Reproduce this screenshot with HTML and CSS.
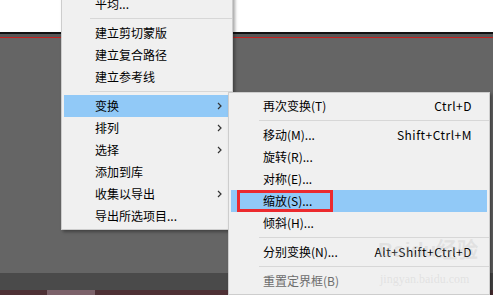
FILE: index.html
```html
<!DOCTYPE html>
<html lang="zh-CN">
<head>
  <meta charset="UTF-8">
  <title>变换菜单</title>
  <link rel="stylesheet" href="styles.css">
</head>
<body>
  <div class="backdrop">
    <div class="doc-top"></div>
    <div class="doc-edge"></div>
    <div class="doc-gap"></div>
    <div class="doc-red"></div>
    <div class="workspace"></div>
    <div class="panel-bar"></div>
    <div class="tab-bar"><span class="tab"></span></div>
  </div>

  <div class="menu menu-main">
    <div class="item">平均...</div>
    <div class="sep"></div>
    <div class="item">建立剪切蒙版</div>
    <div class="item">建立复合路径</div>
    <div class="item">建立参考线</div>
    <div class="sep"></div>
    <div class="item active has-sub">变换<svg class="arrow" viewBox="0 0 5 8"><path d="M1 1l3 3-3 3" /></svg></div>
    <div class="item has-sub">排列<svg class="arrow" viewBox="0 0 5 8"><path d="M1 1l3 3-3 3" /></svg></div>
    <div class="item has-sub">选择<svg class="arrow" viewBox="0 0 5 8"><path d="M1 1l3 3-3 3" /></svg></div>
    <div class="item">添加到库</div>
    <div class="item has-sub">收集以导出<svg class="arrow" viewBox="0 0 5 8"><path d="M1 1l3 3-3 3" /></svg></div>
    <div class="item">导出所选项目...</div>
  </div>

  <div class="menu menu-sub">
    <div class="item"><span>再次变换(T)</span><span class="key">Ctrl+D</span></div>
    <div class="sep"></div>
    <div class="item"><span>移动(M)...</span><span class="key">Shift+Ctrl+M</span></div>
    <div class="item"><span>旋转(R)...</span></div>
    <div class="item"><span>对称(E)...</span></div>
    <div class="item active"><span>缩放(S)...</span></div>
    <div class="item"><span>倾斜(H)...</span></div>
    <div class="sep"></div>
    <div class="item"><span>分别变换(N)...</span><span class="key">Alt+Shift+Ctrl+D</span></div>
    <div class="sep"></div>
    <div class="item disabled"><span>重置定界框(B)</span></div>
  </div>

  <div class="mark"></div>

  <div class="wm-logo">Baidu经验</div>
  <div class="wm-url">jingyan.baidu.com</div>
</body>
</html>
```

FILE: styles.css
```css
* {
  margin: 0;
  padding: 0;
  box-sizing: border-box;
}

body {
  width: 493px;
  height: 295px;
  overflow: hidden;
  position: relative;
  background: #656565;
  font-family: "Noto Sans CJK SC", "Noto Sans", sans-serif;
  font-size: 12px;
  color: #000;
}

.backdrop {
  height: 295px;
  display: flex;
  flex-direction: column;
}

.doc-top {
  height: 32px;
  background: #ffffff;
}

.doc-edge {
  height: 2px;
  background: #111;
}

.doc-gap {
  height: 3px;
  background: #575757;
}

.doc-red {
  height: 1px;
  background: #c8201e;
}

.workspace {
  flex: 1;
  background: #656565;
}

.panel-bar {
  height: 17px;
  background: #4a4a4a;
}

.tab-bar {
  height: 5px;
  background: #4e3035;
}

.tab {
  display: block;
  width: 48px;
  height: 5px;
  margin-left: 47px;
  background: #7c626a;
}

/* menus */
.menu {
  position: absolute;
  background: #f0f0f0;
  border: 1px solid #cdcdcd;
  padding: 2px;
  box-shadow: 2px 2px 3px rgba(0, 0, 0, 0.35);
}

.menu-main {
  left: 61px;
  top: -10px;
  width: 172px;
}

.menu-sub {
  left: 228px;
  top: 92px;
  width: 262px;
}

.item {
  height: 22px;
  line-height: 22px;
  padding-left: 31px;
  display: flex;
  align-items: center;
  white-space: nowrap;
}

.menu-sub .item {
  padding-left: 32px;
  padding-right: 15px;
  justify-content: space-between;
}

.item.active {
  background: #91c9f7;
}

.item.disabled {
  color: #6d6d6d;
}

.has-sub {
  justify-content: space-between;
  padding-right: 8px;
}

.arrow {
  width: 5px;
  height: 8px;
  fill: none;
  stroke: #333;
  stroke-width: 1.2;
}

.key {
  text-align: right;
  letter-spacing: 0.5px;
}

.sep {
  height: 7px;
  padding-top: 3px;
}

.sep::after {
  content: "";
  display: block;
  height: 1px;
  background: #d7d7d7;
}

.menu-main .sep {
  margin-left: 26px;
  margin-right: -2px;
}

.menu-sub .sep {
  margin-left: 28px;
  margin-right: -2px;
}

/* red highlight box drawn on the screenshot */
.mark {
  position: absolute;
  left: 237px;
  top: 190px;
  width: 96px;
  height: 22px;
  border: 3px solid #ec2a2e;
}

/* faint watermark of the screenshot source */
.wm-logo {
  position: absolute;
  left: 378px;
  top: 238px;
  font-family: "Liberation Sans", sans-serif;
  font-size: 21px;
  font-weight: bold;
  line-height: 24px;
  color: rgba(190, 190, 190, 0.3);
  pointer-events: none;
}

.wm-url {
  position: absolute;
  left: 380px;
  top: 272px;
  font-family: "Liberation Serif", serif;
  font-size: 12px;
  line-height: 14px;
  color: rgba(190, 190, 190, 0.3);
  pointer-events: none;
}
```
